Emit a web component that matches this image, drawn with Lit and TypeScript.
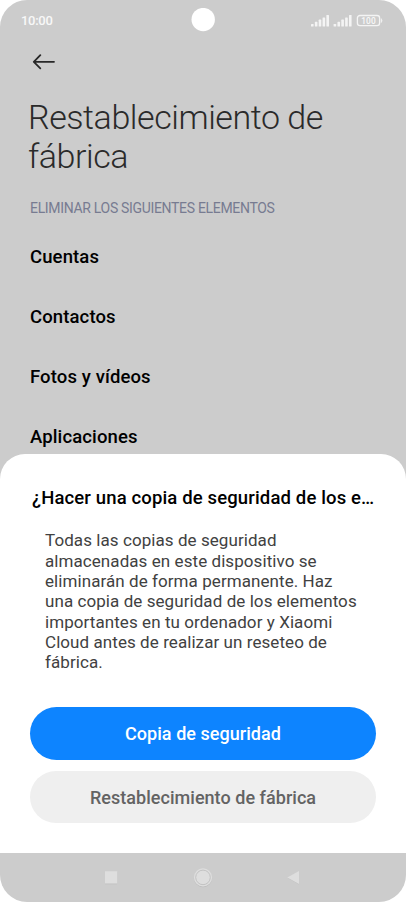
import { LitElement, html, svg, css } from "lit";
import { customElement } from "lit/decorators.js";

const items = ["Cuentas", "Contactos", "Fotos y vídeos", "Aplicaciones"];

@customElement("status-bar")
class StatusBar extends LitElement {
  static styles = css`
    :host {
      display: grid;
      grid-template-columns: 1fr 24px 1fr;
      align-items: center;
      height: 40px;
      color: #f8f8f8;
    }
    .time { padding: 2px 0 0 21px; font-size: 13px; font-weight: 500; line-height: 16px; letter-spacing: -0.3px; }
    .camera { display: block; }
    .signals { justify-self: end; padding: 1px 22px 0 0; display: block; }
    .level { font: 500 8.4px Roboto, sans-serif; fill: #f8f8f8; }
  `;

  private bars(x: number) {
    return [2.6, 4.8, 7, 9.2, 11.6].map(
      (h, i) => svg`<rect x=${x + i * 3.85} y=${12.6 - h} width="2.6" height=${h} rx="0.6" fill="#f4f4f4"/>`
    );
  }

  render() {
    return html`
      <div class="time">10:00</div>
      <svg class="camera" width="24" height="24" viewBox="0 0 24 24"><circle cx="12.2" cy="11.6" r="11.7" fill="#fff" /></svg>
      <svg class="signals" width="73" height="13" viewBox="0 0 73 13">
        ${this.bars(0)} ${this.bars(22.6)}
        <rect x="46.4" y="1.5" width="22.2" height="10.2" rx="2.6" fill="none" stroke="#f4f4f4" stroke-width="1.3"/>
        <path d="M70.2 4.6Q71.8 6.6 70.2 8.6Z" fill="#f4f4f4" stroke="#f4f4f4" stroke-width=".6"/>
        <text class="level" x="57.5" y="10" text-anchor="middle">100</text>
      </svg>
    `;
  }
}

@customElement("backup-sheet")
class BackupSheet extends LitElement {
  static styles = css`
    :host {
      box-sizing: border-box;
      height: 399px;
      padding: 31px 30px 0;
      display: flex;
      flex-direction: column;
      background: #fff;
      border-radius: 25px 25px 0 0;
    }
    h2 {
      margin: 0 0 0 2px;
      font-size: 18.5px;
      line-height: 26px;
      font-weight: 500;
      letter-spacing: 0.14px;
      color: #000;
      white-space: nowrap;
    }
    p { margin: 19.4px 15px 0; height: 142px; font-size: 17px; letter-spacing: 0.07px; line-height: 20.35px; color: #414141; }
    .actions { margin-top: 34.6px; display: flex; flex-direction: column; gap: 11px; }
    button {
      height: 52.5px;
      border: 0;
      padding: 1px 0 0;
      border-radius: 27px;
      font: 500 18px Roboto, sans-serif;
      letter-spacing: 0.04px;
      background: #efefef;
      color: #636363;
    }
    .primary { height: 52.7px; padding: 0; background: #0d84ff; color: #fff; }
  `;

  render() {
    return html`
      <h2>¿Hacer una copia de seguridad de los e…</h2>
      <p>
        Todas las copias de seguridad<br />almacenadas en este dispositivo se<br />eliminarán de forma permanente. Haz<br />una
        copia de seguridad de los elementos<br />importantes en tu ordenador y Xiaomi<br />Cloud antes de realizar un reseteo
        de<br />fábrica.
      </p>
      <div class="actions">
        <button class="primary">Copia de seguridad</button>
        <button>Restablecimiento de fábrica</button>
      </div>
    `;
  }
}

@customElement("nav-bar")
class NavBar extends LitElement {
  static styles = css`
    :host { display: flex; justify-content: center; height: 49px; }
    svg { display: block; }
  `;

  render() {
    return html`
      <svg width="202" height="49" viewBox="0 0 202 49" fill="#dedede">
        <g fill="#c0c0c0">
          <rect x="3" y="19" width="12.2" height="12.3" />
          <circle cx="101" cy="25" r="9.2" />
          <path d="M185.6 25.1 197 18.6v13Z" />
        </g>
        <rect x="3" y="18.3" width="12.2" height="12.2" />
        <circle cx="101" cy="24.4" r="9.1" />
        <circle cx="101" cy="24.4" r="7.3" fill="none" stroke="#c2c2c2" stroke-width="1" />
        <path d="M185.3 24.5 197 18v13Z" />
      </svg>
    `;
  }
}

@customElement("app-root")
class AppRoot extends LitElement {
  static styles = css`
    :host { display: block; background: #fff; font-family: Roboto, sans-serif; }
    .screen {
      width: 406px;
      height: 902px;
      display: flex;
      flex-direction: column;
      overflow: hidden;
      background: #ccc;
      border-radius: 27px;
    }
    main { height: 414px; overflow: hidden; }
    .back { display: block; margin: 14px 0 0 32px; }
    h1 { margin: 28px 0 0 28px; font-size: 34px; line-height: 39px; font-weight: 300; letter-spacing: -0.44px; color: #2a2a2a; }
    h3 { margin: 24px 0 0 30px; font-size: 14px; line-height: 16px; font-weight: 400; letter-spacing: -0.32px; color: #777b91; }
    ul { list-style: none; margin: 11px 0 0; padding: 0 30px; }
    li { height: 60px; line-height: 60px; font-size: 18.5px; font-weight: 500; letter-spacing: 0.12px; color: #000; }
  `;

  render() {
    return html`
      <div class="screen">
        <status-bar></status-bar>
        <main>
          <svg class="back" width="24" height="16" viewBox="0 0 24 16" fill="none" stroke="#282828" stroke-width="1.8" stroke-linecap="round" stroke-linejoin="round">
            <path d="M22 7.8H2M8.3 1.2 1.8 7.8l6.5 6.5" />
          </svg>
          <h1>Restablecimiento de<br />fábrica</h1>
          <h3>ELIMINAR LOS SIGUIENTES ELEMENTOS</h3>
          <ul>
            ${items.map((t) => html`<li>${t}</li>`)}
          </ul>
        </main>
        <backup-sheet></backup-sheet>
        <nav-bar></nav-bar>
      </div>
    `;
  }
}
